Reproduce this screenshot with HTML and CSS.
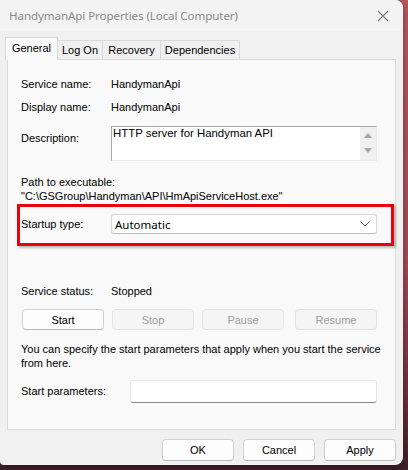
FILE: index.html
```html
<!DOCTYPE html>
<html lang="en">
<head>
    <meta charset="UTF-8">
    <title>HandymanApi Properties (Local Computer)</title>
    <link rel="stylesheet" href="styles.css">
</head>
<body>
    <div class="window">
        <div class="titlebar">
            <span class="title">HandymanApi Properties (Local Computer)</span>
            <svg class="close" width="12" height="12" viewBox="0 0 12 12">
                <path d="M1 1 L11 11 M11 1 L1 11" stroke="#7a7a7a" stroke-width="1.1" fill="none"/>
            </svg>
        </div>

        <div class="tabs">
            <div class="tab active">General</div>
            <div class="tab">Log On</div>
            <div class="tab">Recovery</div>
            <div class="tab">Dependencies</div>
        </div>

        <div class="panel">
            <div class="row">
                <span class="label">Service name:</span>
                <span class="value">HandymanApi</span>
            </div>
            <div class="row">
                <span class="label">Display name:</span>
                <span class="value">HandymanApi</span>
            </div>
            <div class="row row-desc">
                <span class="label">Description:</span>
                <div class="desc-box">
                    <div class="desc-text">HTTP server for Handyman API</div>
                    <div class="scroll">
                        <svg width="8" height="6" viewBox="0 0 8 6"><path d="M0 6 L4 1 L8 6 Z" fill="#a6a6a6"/></svg>
                        <svg width="8" height="6" viewBox="0 0 8 6"><path d="M0 0 L4 5 L8 0 Z" fill="#a6a6a6"/></svg>
                    </div>
                </div>
            </div>

            <div class="path">
                <div>Path to executable:</div>
                <div>"C:\GSGroup\Handyman\API\HmApiServiceHost.exe"</div>
            </div>

            <div class="row row-startup">
                <span class="label">Startup type:</span>
                <div class="combo">
                    <span>Automatic</span>
                    <svg width="10" height="6" viewBox="0 0 10 6"><path d="M0.5 0.5 L5 5 L9.5 0.5" stroke="#555" stroke-width="1" fill="none"/></svg>
                </div>
            </div>

            <div class="row row-status">
                <span class="label">Service status:</span>
                <span class="value">Stopped</span>
            </div>

            <div class="actions">
                <button class="btn">Start</button>
                <button class="btn" disabled>Stop</button>
                <button class="btn" disabled>Pause</button>
                <button class="btn" disabled>Resume</button>
            </div>

            <p class="hint">You can specify the start parameters that apply when you start the service from here.</p>

            <div class="row row-params">
                <span class="label label-wide">Start parameters:</span>
                <div class="input"></div>
            </div>
        </div>

        <div class="footer">
            <button class="btn btn-footer">OK</button>
            <button class="btn btn-footer">Cancel</button>
            <button class="btn btn-footer">Apply</button>
        </div>
    </div>
</body>
</html>
```

FILE: styles.css
```css
* {
    margin: 0;
    padding: 0;
    box-sizing: border-box;
}

body {
    width: 408px;
    height: 470px;
    overflow: hidden;
    background: linear-gradient(180deg, #b75a5e 0%, #a54d57 55%, #6a2f3e 85%, #3f1f2a 100%);
    font-family: 'Liberation Sans', Arial, sans-serif;
    font-size: 11px;
    color: #000;
}

.window {
    width: 403px;
    height: 465px;
    background: #f0f0f0;
    border-radius: 0 8px 8px 4px;
    box-shadow: 0 2px 8px rgba(0, 0, 0, 0.35);
    overflow: hidden;
    display: flex;
    flex-direction: column;
}

.titlebar {
    height: 31px;
    background: #f3f3f3;
    display: flex;
    align-items: center;
    justify-content: space-between;
    padding: 0 14px 0 9px;
}

.title {
    font-family: 'Noto Sans', sans-serif;
    font-size: 11.6px;
    color: #8a8a8a;
    letter-spacing: -0.1px;
}

/* tabs */

.tabs {
    display: flex;
    align-items: flex-end;
    height: 28px;
    padding: 0 0 0 6px;
}

.tab {
    height: 19px;
    line-height: 18px;
    background: #f0f0f0;
    border: 1px solid #d9d9d9;
    border-bottom: none;
    margin-left: -1px;
    white-space: nowrap;
    text-align: center;
}

.tab:nth-child(2) { width: 46px; }
.tab:nth-child(3) { width: 59px; }
.tab:nth-child(4) { width: 80px; }

.tab.active {
    width: 53px;
    height: 23px;
    line-height: 20px;
    background: #f9f9f9;
    margin-bottom: -1px;
    position: relative;
    z-index: 1;
}

.panel {
    margin: 0 7px;
    height: 371px;
    background: #f9f9f9;
    border: 1px solid #dadada;
    padding: 18px 13px 0 13px;
}

/* rows */

.row {
    display: flex;
    align-items: center;
    line-height: 13px;
}

.row + .row {
    margin-top: 10px;
}

.label {
    width: 90px;
    flex-shrink: 0;
}

.label-wide {
    width: 109px;
}

.row-desc {
    margin-top: 12px !important;
    align-items: flex-start;
}

.row-desc .label {
    margin-top: 6px;
}

.desc-box {
    width: 266px;
    height: 35px;
    background: #fff;
    border-top: 1px solid #a8a8a8;
    border-left: 1px solid #a8a8a8;
    border-right: 1px solid #eaeaea;
    border-bottom: 1px solid #eaeaea;
    display: flex;
    justify-content: space-between;
}

.desc-text {
    padding-left: 1px;
    font-size: 11.4px;
    line-height: 13px;
}

.scroll {
    width: 16px;
    background: #f0f0f0;
    display: flex;
    flex-direction: column;
    align-items: center;
    justify-content: space-between;
    padding: 5px 0 6px;
}

.path {
    margin-top: 14px;
    line-height: 14px;
}

.row-startup {
    margin-top: 11px !important;
    position: relative;
}

/* highlight annotation drawn over the screenshot */
.row-startup::after {
    content: "";
    position: absolute;
    left: -4px;
    top: -10px;
    width: 371px;
    height: 36px;
    border: 3px solid #e8000b;
    box-shadow: 2px 2px 2px rgba(0, 0, 0, 0.25);
    pointer-events: none;
}

.combo {
    width: 266px;
    height: 20px;
    background: #fff;
    border: 1px solid #d6d6d6;
    border-bottom-color: #bdbdbd;
    border-radius: 3px;
    display: flex;
    align-items: center;
    justify-content: space-between;
    padding: 0 6px 0 3px;
    font-family: 'Noto Sans', sans-serif;
    font-size: 11.5px;
}

.row-status {
    margin-top: 51px !important;
}

.actions {
    display: flex;
    margin-top: 11px;
    padding-left: 1px;
    gap: 8px;
}

.btn {
    width: 82px;
    height: 21px;
    background: #fdfdfd;
    border: 1px solid #d0d0d0;
    border-bottom-color: #b8b8b8;
    border-radius: 4px;
    font-family: 'Liberation Sans', Arial, sans-serif;
    font-size: 11px;
    color: #000;
}

.btn:disabled {
    background: #f5f5f5;
    border-color: #e3e3e3;
    color: #9d9d9d;
}

.actions .btn:last-child {
    margin-left: 3px;
}

.hint {
    margin-top: 12px;
    line-height: 14px;
}

.row-params {
    margin-top: 10px !important;
}

.input {
    width: 247px;
    height: 23px;
    background: #fff;
    border: 1px solid #e5e5e5;
    border-bottom-color: #8a8a8a;
    border-radius: 3px;
}

.footer {
    display: flex;
    justify-content: flex-end;
    gap: 9px;
    padding: 9px 7px 0 0;
}

.btn-footer {
    width: 72px;
    height: 22px;
}
```
